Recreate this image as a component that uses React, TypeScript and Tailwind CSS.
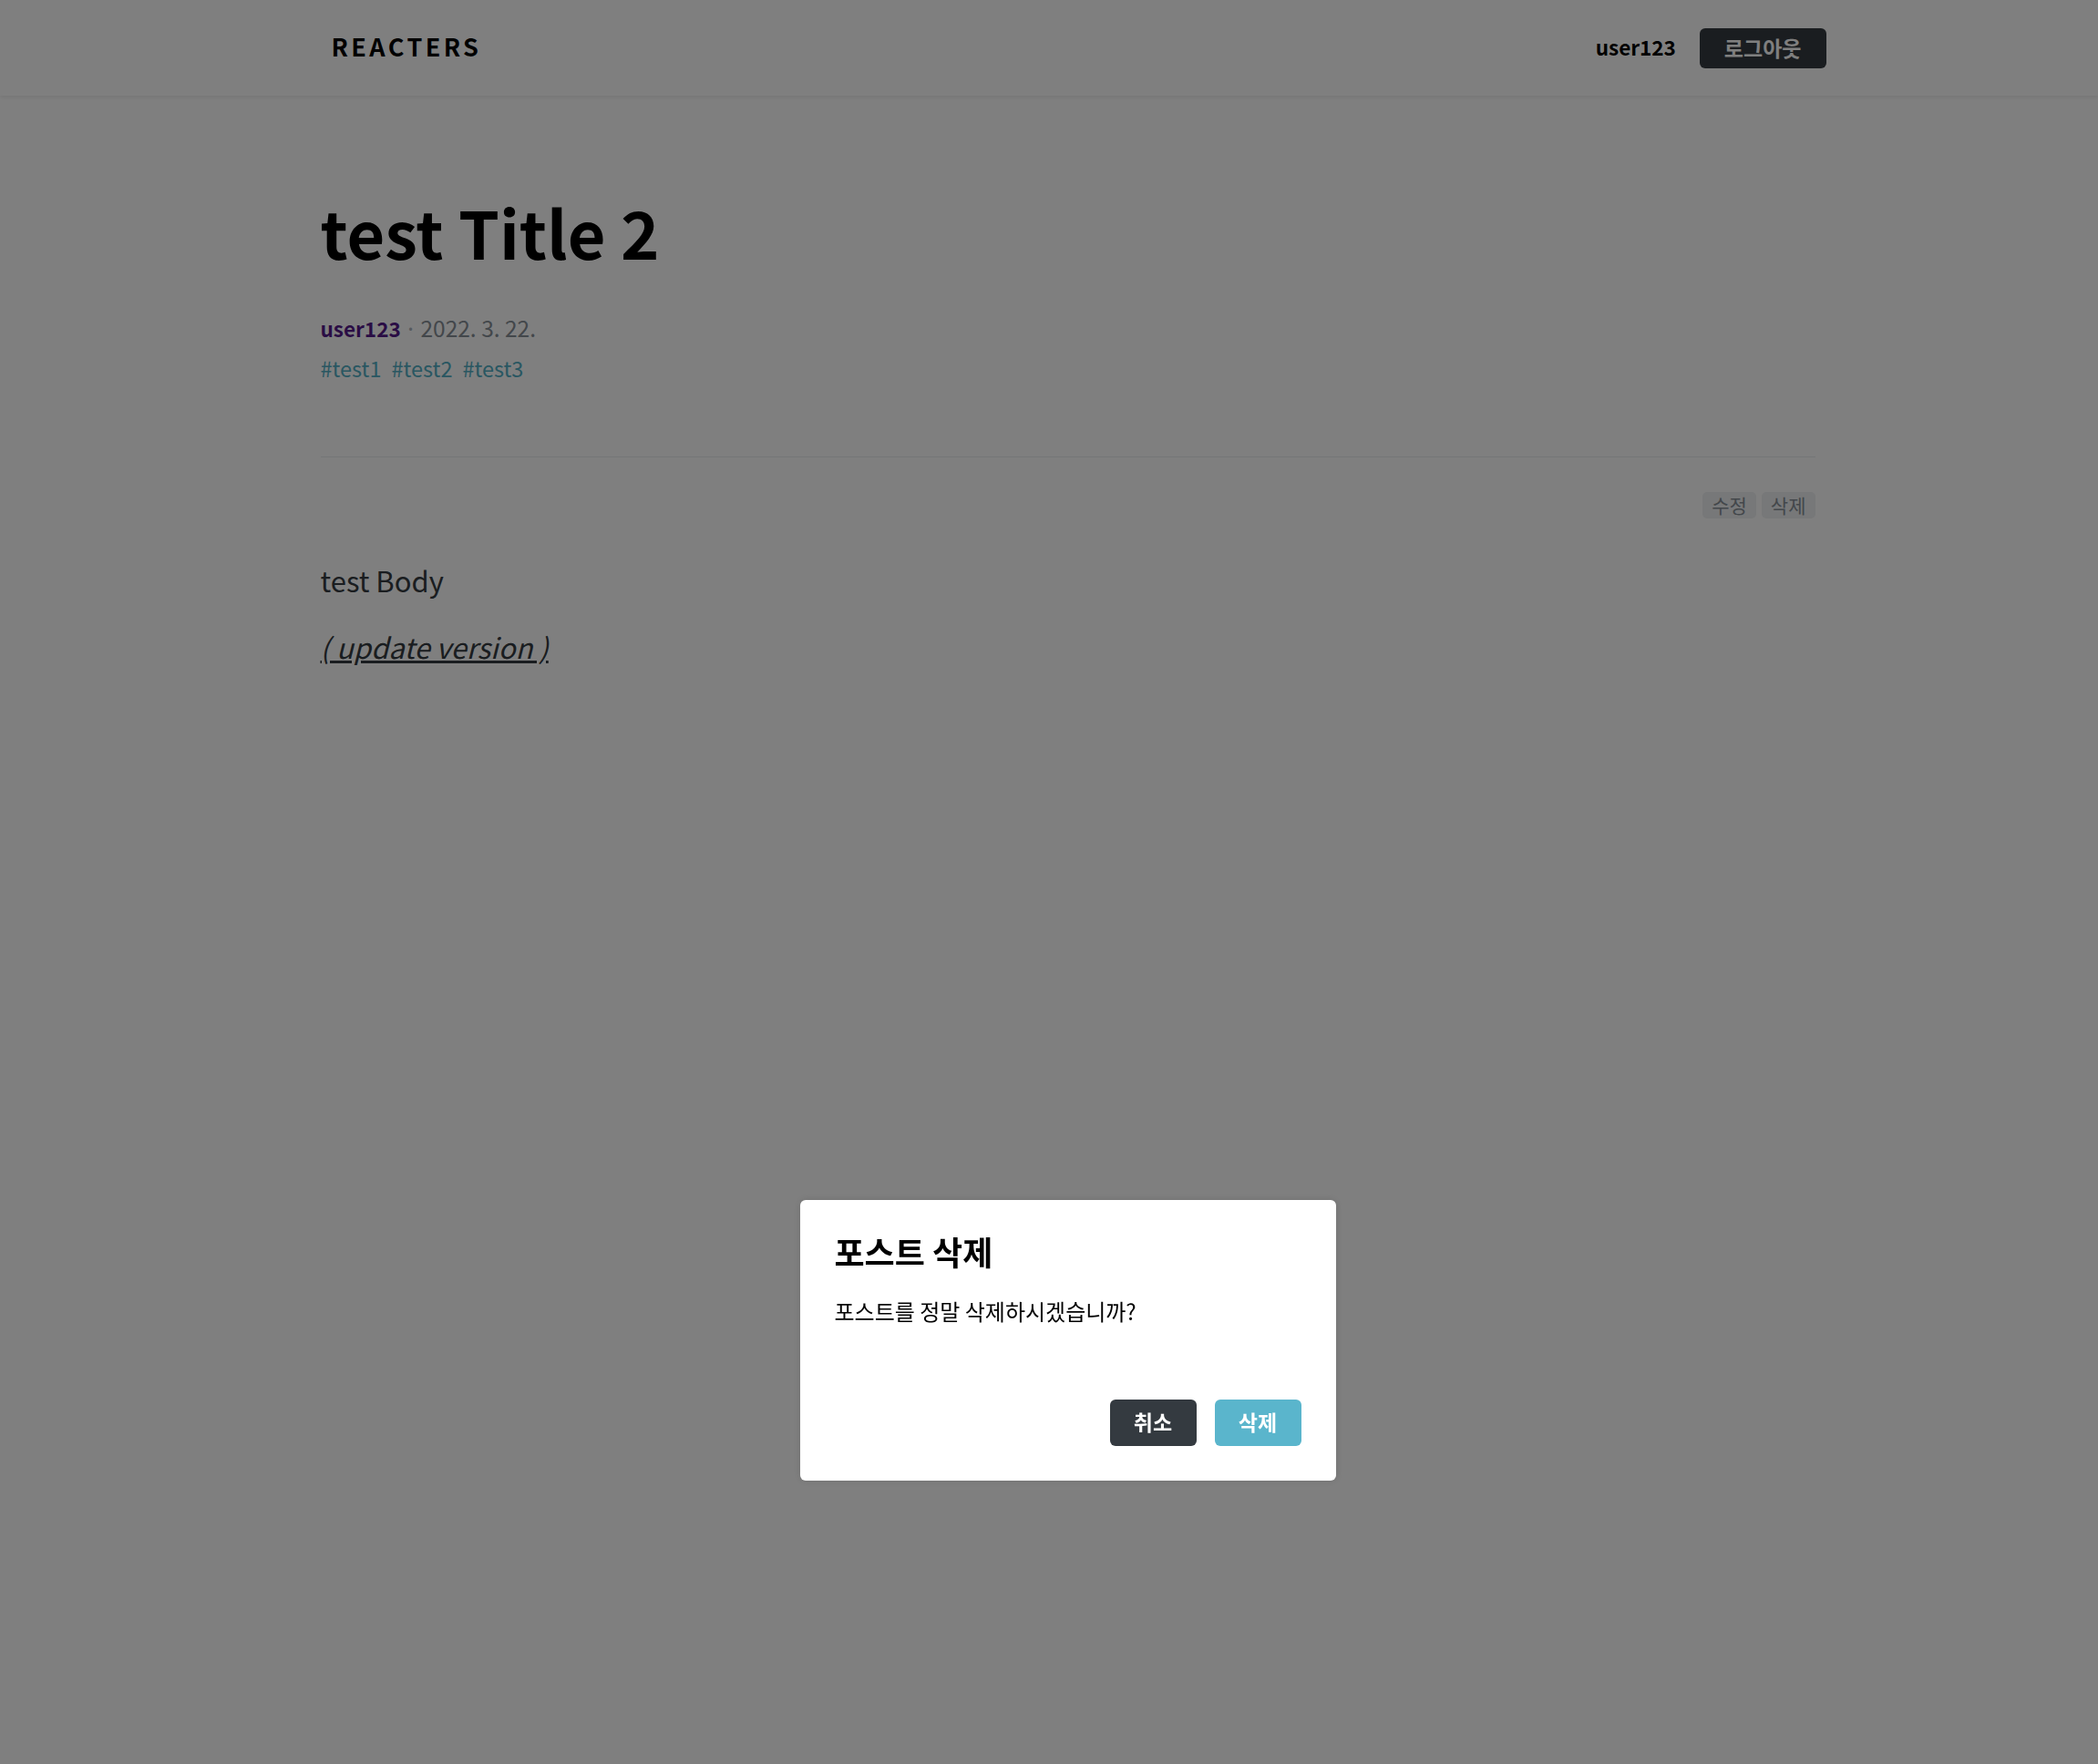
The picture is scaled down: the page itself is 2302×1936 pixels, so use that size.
import React from "react";

const tags = ["test1", "test2", "test3"];

const Header = () => (
  <header className="h-[105px] bg-white shadow-[0_2px_4px_rgba(0,0,0,0.08)] pl-[41px]">
    <div className="w-[1690px] mx-auto h-full pl-[37px] pr-[13px] flex items-center justify-between">
      <div className="text-[27px] font-bold tracking-[3.4px] text-black leading-none mb-[4px]">REACTERS</div>
      <div className="flex items-center">
        <div className="text-[22.5px] font-bold text-black mr-[26px] mb-[2px]">user123</div>
        <button className="h-[44px] px-[27px] rounded-[6px] bg-[#343a40] text-white text-[23px] font-bold leading-none">
          로그아웃
        </button>
      </div>
    </div>
  </header>
);

const PostViewer = () => (
  <div className="pl-[41px]">
    <div className="w-[1690px] mx-auto px-[25px]">
      <div className="border-b border-[#e9ecef] pt-[95px] pb-[80px]">
        <h1 className="text-[72px] font-bold leading-[108px] text-black">test Title 2</h1>
        <div className="mt-[35px] text-[24.5px] leading-[34.5px] text-[#868e96]">
          <span className="font-bold text-[22.5px] text-[#551a8b]">user123</span>
          <span className="text-[#adb5bd] px-[4px]">·</span>
          <span>2022. 3. 22.</span>
        </div>
        <div className="mt-[9px] flex gap-[11px] text-[23.5px] leading-[34.5px] text-[#52aec4]">
          {tags.map((t) => (
            <span key={t}>#{t}</span>
          ))}
        </div>
      </div>
      <div className="flex justify-end gap-[6px] mt-[38px]">
        <button className="h-[29px] px-[10px] rounded-[5px] bg-[#eef0f2] text-[#868e96] text-[21px] leading-none">
          수정
        </button>
        <button className="h-[29px] px-[10px] rounded-[5px] bg-[#eef0f2] text-[#868e96] text-[21px] leading-none">
          삭제
        </button>
      </div>
      <div className="mt-[43px] text-[31px] leading-[49.6px] text-[#343a40]">
        <p>test Body</p>
        <p className="mt-[23px]">
          <u>
            <i>( update version )</i>
          </u>
        </p>
      </div>
    </div>
  </div>
);

const AskModal = () => (
  <div className="fixed inset-0 bg-black/50 flex items-center justify-center pl-[41px] pt-[1006px]">
    <div className="w-[588px] bg-white rounded-[6px] shadow-[0_0_8px_rgba(0,0,0,0.125)] px-[38px] pt-[35px] pb-[38px]">
      <h2 className="text-[36px] font-bold leading-[42px] text-black">포스트 삭제</h2>
      <p className="mt-[28px] text-[24px] leading-[34px] text-black">포스트를 정말 삭제하시겠습니까?</p>
      <div className="mt-[80px] flex justify-end gap-[20px]">
        <button className="h-[51px] w-[95px] rounded-[6px] bg-[#343a40] text-white text-[23px] font-bold leading-none pb-[3px]">
          취소
        </button>
        <button className="h-[51px] w-[95px] rounded-[6px] bg-[#5ab5cc] text-white text-[23px] font-bold leading-none pb-[3px]">
          삭제
        </button>
      </div>
    </div>
  </div>
);

export default function App() {
  return (
    <div className="min-h-screen bg-white font-['Noto_Sans_CJK_KR','Noto_Sans',sans-serif]">
      <Header />
      <PostViewer />
      <AskModal />
    </div>
  );
}
